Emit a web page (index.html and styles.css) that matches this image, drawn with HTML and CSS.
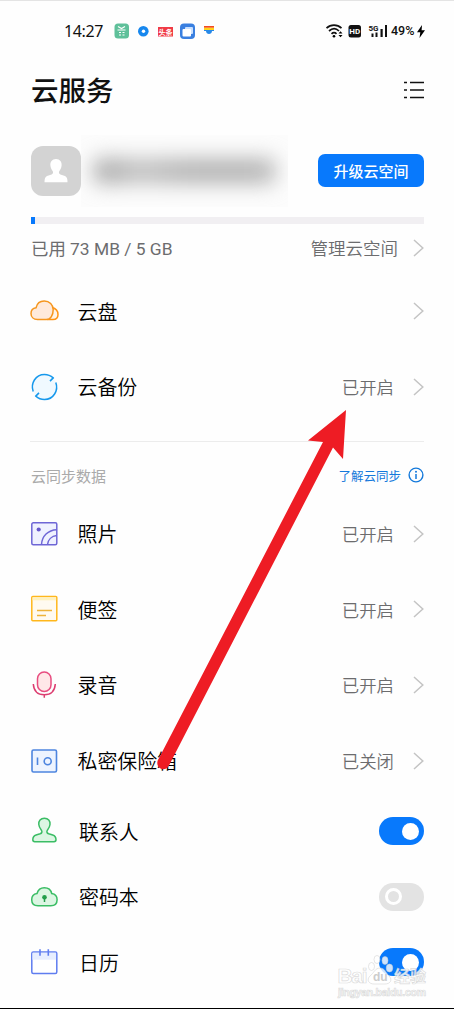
FILE: index.html
```html
<!DOCTYPE html>
<html lang="zh-CN">
<head>
<meta charset="utf-8">
<title>云服务</title>
<link rel="stylesheet" href="styles.css">
</head>
<body>
<main class="phone">
  <header class="status">
    <span class="time">14:27</span>
    <svg class="apps" width="104" height="18" viewBox="0 0 104 18">
      <rect x="0.5" y="1.5" width="14.5" height="15" rx="3.5" fill="#5fc09a"/>
      <path d="M4 4.5l3.500 2 3.500-2M3.500 8h8M5 10.500h2M8.500 10.500h2M5 13h2M8.500 13h2" stroke="#fff" stroke-width="1.200" fill="none"/>
      <circle cx="29.300" cy="9.300" r="5.300" fill="#1687ee"/><circle cx="29.500" cy="9.300" r="1.700" fill="#fff"/>
      <rect x="44" y="5" width="15" height="9.500" fill="#f03b46"/>
      <text x="51.500" y="12.500" class="tiny">头条</text>
      <rect x="66" y="1.500" width="15" height="15.500" rx="4" fill="#397fe0"/>
      <rect x="71" y="5" width="8" height="7" rx="1" fill="#c9e0ff"/><rect x="68.500" y="7" width="8.500" height="7.500" rx="1" fill="#fff"/>
      <path d="M90 4h10v1.800H90z" fill="#f44a22"/><path d="M90 5.800h10v2.200H90z" fill="#ffd21c"/><path d="M90 8h10v1H98c0 4-6 4-6 0h-2z" fill="#2789e8"/>
    </svg>
    <svg class="signals" width="66" height="18" viewBox="0 0 66 18">
      <g fill="none" stroke="#111" stroke-width="1.700"><path d="M1.500 6.200c4.300-4 10.700-4 15 0M4 9c3.300-3 7-3 10 0M6.500 11.800c1.700-1.600 3.500-1.600 5 0"/></g>
      <circle cx="9" cy="14.200" r="1.300"/><path d="M13.500 11.500l2-2.300 2 2.300zM13.500 13l2 2.300 2-2.300z"/>
      <rect x="23.500" y="3" width="12.500" height="12.500" rx="2.500" fill="#111"/>
      <text x="29.750" y="12.300" class="hd">HD</text>
      <text x="43.500" y="8.700" class="five">5G</text>
      <path d="M46.500 11.500h2v3.500h-2zM50.500 10.500h2V15h-2zM55.500 7h2.200v8h-2.200zM60 3h2v12h-2z" fill="#111"/>
    </svg>
    <span class="battery">49%</span>
    <svg class="bolt" width="8" height="13" viewBox="0 0 8 13"><path d="M5 0L0 7.200h3.300L2.500 13 8 5.200H4.600z"/></svg>
  </header>

  <section class="title">
    <h1>云服务</h1>
    <svg width="20" height="20" viewBox="0 0 20 20"><path d="M0 2.500h3M6 2.500h14M0 10h3M6 10h14M0 17.500h3M6 17.500h14" stroke="#111" stroke-width="1.700"/></svg>
  </section>

  <section class="account">
    <div class="avatar"><svg width="24" height="24" viewBox="0 0 24 24"><path d="M12 0c-4 0-6 3-5.600 6.500.3 2.500 1 3.500 2.200 5.500.8 1.400.6 2.800-1 3.400L3 17c-2 1-2.500 3-2.500 6.200h23c0-3.200-.5-5.200-2.500-6.200l-4.600-1.600c-1.600-.6-1.800-2-1-3.400 1.200-2 1.900-3 2.200-5.500C18 3 16 0 12 0z" fill="#fff"/></svg></div>
    <div class="masked"><div class="smear"></div></div>
    <button class="upgrade">升级云空间</button>
  </section>
  <div class="meter"><div class="used"></div></div>
  <section class="usage">
    <span class="grow">已用 73 MB / 5 GB</span><span>管理云空间</span>
    <svg class="chev" viewBox="0 0 11 18"><path d="M1 1l8.800 8L1 17"/></svg>
  </section>

  <section class="group top">
    <div class="row"><svg class="icon" viewBox="0 0 30 30"><path d="M22 10.500c4 1 6 4 6 7 0 3-2 5-5 5h-6" transform="translate(0 1)" fill="#fff4e8" stroke="#ff9415" stroke-width="1.500"/><path d="M7.500 22.500c-4 0-6.500-2.500-6.500-6 0-3.200 2-5.200 5-5.700C7 6.500 10 4 14.200 4c5.300 0 9 3.800 9 8.500 0 5.500-2.500 10-7 10z" transform="translate(0 1)" fill="#ffeadb" stroke="#f5961f" stroke-width="1.500"/></svg><span class="name">云盘</span><svg class="chev" viewBox="0 0 11 18"><path d="M1 1l8.800 8L1 17"/></svg></div>
    <div class="row"><svg class="icon" viewBox="0 0 30 30"><circle cx="14.500" cy="15" r="12" fill="#f0f9ff"/><path d="M3.200 19.500C.3 11.500 5.500 2.500 14.500 2.500c3.500 0 6.300 1.200 8.700 3.400l-3.200 3.200M25.800 10.500c2.900 8-2.300 17-11.300 17-3.500 0-6.300-1.200-8.700-3.400L9 20.900" fill="none" stroke="#1698ec" stroke-width="1.500"/></svg><span class="name">云备份</span><span class="state">已开启</span><svg class="chev" viewBox="0 0 11 18"><path d="M1 1l8.800 8L1 17"/></svg></div>
  </section>
  <hr class="rule">
  <section class="caption"><span class="grow">云同步数据</span><span class="link">了解云同步</span><svg width="16" height="16" viewBox="0 0 16 16"><circle cx="8" cy="8" r="6.900" fill="none" stroke="#1479db" stroke-width="1.400"/><circle cx="8" cy="4.700" r="1" fill="#1479db"/><path d="M8 7v5" stroke="#1479db" stroke-width="1.500"/></svg></section>

  <section class="group">
    <div class="row"><svg class="icon" viewBox="0 0 30 30"><rect x="1.800" y="3.800" width="25" height="22" rx="1.500" fill="#eff1ff" stroke="#6e66d6" stroke-width="1.500"/><circle cx="8.700" cy="10.500" r="2.100" fill="#6758cc"/><path d="M11.500 25.500c.5-8.500 6.500-14.500 15.300-14.800M17.500 25.500c.5-4.700 4-8.500 9.300-9" fill="none" stroke="#6e66d6" stroke-width="1.500"/></svg><span class="name">照片</span><span class="state">已开启</span><svg class="chev" viewBox="0 0 11 18"><path d="M1 1l8.800 8L1 17"/></svg></div>
    <div class="row"><svg class="icon" viewBox="0 0 30 30"><rect x="1.800" y="2.500" width="25" height="24.300" rx="1" fill="#fffaf0" stroke="#ffb71c" stroke-width="1.500"/><path d="M2.500 3.300h23.600v3H2.500z" fill="#fff1bd"/><path d="M7 16.500h15M7 21.500h9" stroke="#eeb33a" stroke-width="1.500"/></svg><span class="name">便签</span><span class="state">已开启</span><svg class="chev" viewBox="0 0 11 18"><path d="M1 1l8.800 8L1 17"/></svg></div>
    <div class="row"><svg class="icon" viewBox="0 0 30 30"><rect x="7.500" y="2" width="13.500" height="19.500" rx="6.700" fill="#ffe7e8" stroke="#e84d80" stroke-width="1.500"/><path d="M3.300 14c.5 7.200 4.800 10.800 11 10.800S24.800 21.200 25.300 14M14.300 24.800v3" fill="none" stroke="#dc3d70" stroke-width="1.500"/></svg><span class="name">录音</span><span class="state">已开启</span><svg class="chev" viewBox="0 0 11 18"><path d="M1 1l8.800 8L1 17"/></svg></div>
    <div class="row"><svg class="icon" viewBox="0 0 30 30"><rect x="2" y="4" width="24.500" height="22" rx="1.500" fill="#edf4ff" stroke="#4d85df" stroke-width="1.600"/><path d="M7.500 11.500v7.500" stroke="#4d85df" stroke-width="1.600"/><circle cx="17.700" cy="15.300" r="3.500" fill="none" stroke="#4d85df" stroke-width="1.600"/></svg><span class="name">私密保险箱</span><span class="state">已关闭</span><svg class="chev" viewBox="0 0 11 18"><path d="M1 1l8.800 8L1 17"/></svg></div>
  </section>
  <section class="group toggles">
    <div class="row"><svg class="icon" viewBox="0 0 30 30"><path d="M14.400 2.300c-3.800 0-6 2.700-5.600 6.200.2 2.400 1.300 4 2.600 5.700 1 1.600.5 3-1.300 3.600l-4 1.200c-2.300.8-3.300 2.500-3.300 4.800 0 1.200.8 1.900 2 1.900H24c1.200 0 2-.7 2-1.900 0-2.300-1-4-3.300-4.800l-4-1.200c-1.800-.6-2.300-2-1.300-3.600 1.300-1.700 2.400-3.300 2.600-5.700.4-3.500-1.800-6.200-5.600-6.200z" fill="#dcf6e3" stroke="#3bbd65" stroke-width="1.500"/></svg><span class="name">联系人</span><span class="switch"><i></i></span></div>
    <div class="row"><svg class="icon" viewBox="0 0 30 30"><path d="M8 23.700c-4 0-6.300-2.500-6.300-6 0-3.400 2.200-5.700 5.300-6.200C8 8 10.500 5.700 14.300 5.700S21 8 21.700 11.500c3.200.5 5.400 2.800 5.400 6.200 0 3.500-2.300 6-6.300 6z" fill="#dcf6e3" stroke="#3bbd65" stroke-width="1.500"/><circle cx="14.500" cy="15.300" r="2.300" fill="#249e4b"/><path d="M14.500 16v4" stroke="#249e4b" stroke-width="1.500"/></svg><span class="name">密码本</span><span class="switch off"><i></i></span></div>
    <div class="row"><svg class="icon" viewBox="0 0 30 30"><rect x="1.800" y="5" width="25" height="21.500" rx="1.500" fill="#fff" stroke="#5f7df0" stroke-width="1.500"/><path d="M2.500 5.700h23.600v7H2.500z" fill="#e7eeff"/><path d="M10 2.300v6.400M18.300 2.300v6.400" stroke="#5f7df0" stroke-width="1.600"/></svg><span class="name">日历</span><span class="switch"><i></i></span></div>
  </section>

  <svg class="arrow" width="200" height="370" viewBox="0 0 200 370"><path d="M196 7L158 37.500l15 1.500L8 357C4.500 364.500 14.500 370 18.700 363L183 44.500l10 11.500z" fill="#ee1c24"/></svg>
  <svg class="watermark" width="100" height="50" viewBox="0 0 100 50">
    <g class="wm"><text x="5.500" y="32" font-size="21" textLength="30">Bai</text><text x="62" y="31" font-size="16">经验</text><text x="6" y="44.500" font-size="10.500" textLength="88">jingyan.baidu.com</text></g>
    <g fill="#fff" fill-opacity=".8" stroke="#ccc" stroke-opacity=".7" stroke-width=".7"><ellipse cx="39.500" cy="15.500" rx="3" ry="4"/><ellipse cx="45" cy="8.500" rx="3" ry="4"/><ellipse cx="53" cy="9.500" rx="3" ry="4"/><ellipse cx="57.500" cy="17" rx="3.300" ry="4"/><path d="M48 17c5 0 6 5 9 8 4 4 1 8-4 8H42c-5 0-8-4-4-8 4-3 5-8 10-8z"/></g>
    <text x="41" y="30" class="du">du</text>
  </svg>
</main>
</body>
</html>
```
FILE: styles.css
```css
* { box-sizing: border-box; }
body { margin: 0; background: #fefefe; }
.phone {
  position: relative;
  width: 454px;
  height: 1009px;
  overflow: hidden;
  padding: 0 30px;
  border-top: 1px solid #e4e4e4;
  border-bottom: 1px solid #000;
  font-family: Roboto, "Noto Sans CJK SC", sans-serif;
  color: #111;
}
svg { display: block; flex: none; }
.status { display: flex; align-items: center; width: 400px; height: 60px; padding: 0 0 0 34px; }
.time { flex: none; width: 50px; font: 16px/20px "Noto Sans", sans-serif; letter-spacing: -0.4px; }
.apps { margin-right: 107px; }
.battery { flex: none; width: 25px; font: 500 12.5px/18px Roboto, sans-serif; }
.bolt { margin-left: 1px; }
.tiny { font: 700 7px "Noto Sans CJK SC", sans-serif; fill: #fff; text-anchor: middle; }
.hd { font: 700 8px Roboto, sans-serif; fill: #fff; text-anchor: middle; }
.five { font: 700 8px Roboto, sans-serif; fill: #111; }
.title { display: flex; align-items: center; justify-content: space-between; height: 58px; }
h1 { margin: 3px 0 0 1px; font-size: 27.5px; font-weight: 500; line-height: 40px; }
.account { display: flex; align-items: center; height: 93px; margin-top: 5px; padding: 0 0 0 1px; }
.avatar { display: flex; align-items: center; justify-content: center; flex: none; width: 50px; height: 50px; border-radius: 12px; background: #d3d3d3; }
.masked { flex: none; width: 207px; height: 72px; padding: 23px 12px; overflow: hidden; background: #fcfcfc; }
.smear { height: 26px; border-radius: 8px; background: linear-gradient(90deg, #b0b0b0 0, #b4b4b4 15%, #c4c4c4 23%, #b6b6b6 50%, #b4b4b4 80%, #bcbcbc); filter: blur(10px); }
.upgrade { width: 106px; height: 33px; margin-left: 30px; padding: 0; border: 0; border-radius: 7px; background: #0879fc; color: #fff; font: 500 15px/33px "Noto Sans CJK SC", sans-serif; }
.meter { height: 7px; background: #f1eff2; margin-left: 1px; }
.used { width: 4px; height: 7px; background: #0879fc; }
.usage { display: flex; align-items: center; height: 49px; padding-left: 1px; color: #6c6c6e; font-size: 17.5px; font-weight: 350; }
.usage .grow { font-weight: 400; font-size: 17.4px; }
.usage span { margin-top: -2px; }
.usage .chev { margin-top: -1px; }
.grow { flex: 1; }
.chev { width: 11px; height: 18px; margin-left: 15px; fill: none; stroke: #c4c4c4; stroke-width: 1.5; }
.row { display: flex; align-items: center; height: 75.6px; }
.icon { width: 30px; height: 30px; }
.name { flex: 1; padding-left: 17.5px; font-size: 19.9px; font-weight: 350; color: #000; }
.top { padding-top: 0.3px; }
.state { color: #6c6c6e; font-size: 17.4px; font-weight: 350; }
.row .chev { margin-left: 19px; }
.rule { height: 1px; margin: 17px 0 0; border: 0; background: #ececec; }
.caption { display: flex; align-items: center; height: 66px; margin-bottom: -12.5px; padding-left: 1px; color: #aaa; font-size: 15px; }
.link { margin-right: 7px; color: #1479db; font-size: 12.5px; }
.toggles .row { height: 65.6px; }
.toggles .name { padding-left: 19px; }
.switch { width: 45px; height: 28px; padding: 5.5px; border-radius: 14px; background: #0879fc; display: flex; justify-content: flex-end; }
.switch i { width: 17px; height: 17px; border-radius: 50%; background: #fff; }
.switch.off { justify-content: flex-start; background: #e3e3e3; }
.switch.off i { border: 3px solid #fff; background: transparent; }
.arrow { position: absolute; left: 150px; top: 402px; }
.watermark { position: absolute; left: 332px; top: 950px; }
.wm { font-family: "Liberation Sans", "Noto Sans CJK SC", sans-serif; font-weight: 700; fill: #fff; fill-opacity: .85; stroke: #c8c8c8; stroke-opacity: .65; stroke-width: .7; }
.du { font: 700 12px "Liberation Sans", sans-serif; fill: #ccc; }
```
